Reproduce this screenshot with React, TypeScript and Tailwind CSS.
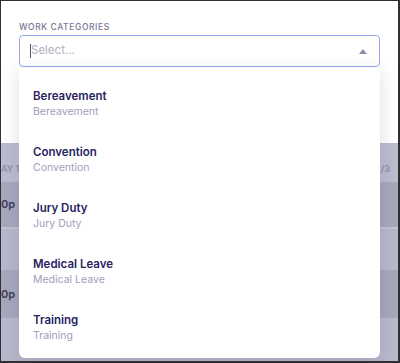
import React from "react";

const options = ["Bereavement", "Convention", "Jury Duty", "Medical Leave", "Training"];

export default function App() {
  return (
    <div
      className="relative w-[400px] h-[363px] overflow-hidden border border-[#2e2e33] border-r-2 border-b-2 bg-white flex flex-col"
      style={{ fontFamily: "Inter, 'Noto Sans', sans-serif" }}
    >
      {/* modal top */}
      <div className="h-[142px] shrink-0 bg-white px-[18px] pt-[20px]">
        <div className="text-[8.5px] leading-[12px] tracking-[0.07em] font-medium text-[#7b7594] uppercase">
          Work Categories
        </div>
        <div className="mt-[2px] h-[32px] rounded-[4px] border border-[#97a6f0] flex items-center pl-[10px] pr-[12px]">
          <span className="w-px h-[14px] bg-[#55556a]" />
          <span className="text-[11.5px] text-[#b1b0c2]">Select...</span>
          <span className="ml-auto w-0 h-0 border-l-[4px] border-r-[4px] border-b-[5px] border-l-transparent border-r-transparent border-b-[#8e8ca4]" />
        </div>
      </div>

      {/* dimmed table behind */}
      <div className="flex-1 flex flex-col bg-[#b9b9cd]">
        <div className="h-[39px] flex items-start pt-[20px] justify-between text-[9px] leading-[12px] font-semibold text-[#8f8fa9] bg-[#bcbcd0]">
          <span>AY 1:</span>
          <span className="mr-[8px]">/3</span>
        </div>
        <div className="h-[45px] flex items-center bg-[#a7a8bc] text-[11px] font-semibold text-[#3d3d5c]">
          <span>0p</span>
        </div>
        <div className="h-[2px] bg-[#c3c3d3]" />
        <div className="h-[41px] bg-[#b8b8cc]" />
        <div className="h-[48px] flex items-center bg-[#a7a8bc] text-[11px] font-semibold text-[#3d3d5c]">
          <span>0p</span>
        </div>
        <div className="flex-1 bg-[#b9b9cd]" />
      </div>

      {/* open dropdown menu */}
      <div className="absolute left-[18px] top-[66px] w-[361px] h-[291px] bg-white rounded-b-[6px] shadow-[0_6px_18px_rgba(50,50,100,0.16)] pt-[10px]">
        {options.map((o) => (
          <div key={o} className="h-[56px] px-[14px] py-[12px]">
            <div className="text-[11.5px] leading-[15px] font-semibold text-[#28235f]">{o}</div>
            <div className="text-[10.5px] leading-[15px] text-[#a29eba]">{o}</div>
          </div>
        ))}
      </div>
    </div>
  );
}
